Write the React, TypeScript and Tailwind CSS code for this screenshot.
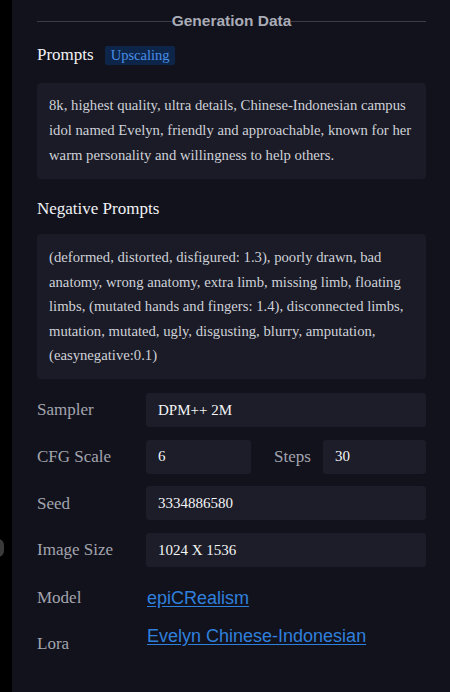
import React from 'react';

const serif = "font-['Liberation_Serif','Times_New_Roman',serif]";
const sans = "font-['Liberation_Sans',Arial,sans-serif]";

function Label({ children }: { children: React.ReactNode }) {
  return <div className={`${serif} text-[17px] text-[#a3a5ae] w-[109px] shrink-0`}>{children}</div>;
}

function Value({ children, className = '' }: { children: React.ReactNode; className?: string }) {
  return (
    <div className={`h-[34px] bg-[#1c1d28] rounded-[3px] flex items-center px-3 ${serif} text-[15px] text-[#f3f4f6] ${className}`}>
      {children}
    </div>
  );
}

export default function App() {
  return (
    <div className="w-[450px] h-[692px] flex bg-black overflow-hidden">
      {/* left strip */}
      <div className="w-[12px] shrink-0 flex flex-col">
        <div className="mt-[539px] -ml-[8px] w-[12px] h-[18px] rounded-full bg-[#3a3a3a]" />
      </div>

      <div className="flex-1 bg-[#12121d] pl-[25px] pr-[24px]">
        {/* header */}
        <div className="flex items-center h-[42px]">
          <div className="flex-1 h-px bg-[#3a3c48]" />
          <div className={`${sans} font-bold text-[15.5px] text-[#a9acb6]`}>Generation Data</div>
          <div className="flex-1 h-px bg-[#3a3c48]" />
        </div>

        {/* prompts */}
        <div className="flex items-center gap-[11px] h-[26px]">
          <h2 className={`${serif} text-[17px] text-[#f1f2f5]`}>Prompts</h2>
          <span className={`${serif} text-[14.5px] text-[#4a8ee6] bg-[#0d2549] rounded-[2px] px-[6px] leading-[19px]`}>Upscaling</span>
        </div>
        <div className={`mt-[15px] bg-[#1a1b26] rounded-[4px] px-3 pt-[10px] pb-[11px] ${serif} text-[14.7px] leading-[25px] text-[#cfd1d8]`}>
          8k, highest quality, ultra details, Chinese-Indonesian campus idol named Evelyn, friendly and approachable, known for her warm personality and willingness to help others.
        </div>

        {/* negative prompts */}
        <h2 className={`${serif} text-[17px] text-[#f1f2f5] mt-[17px] leading-[26px]`}>Negative Prompts</h2>
        <div className={`mt-[12px] bg-[#1a1b26] rounded-[4px] px-3 pt-[11px] pb-[11px] ${serif} text-[14.7px] leading-[24.6px] text-[#cfd1d8]`}>
          (deformed, distorted, disfigured: 1.3), poorly drawn, bad anatomy, wrong anatomy, extra limb, missing limb, floating limbs, (mutated hands and fingers: 1.4), disconnected limbs, mutation, mutated, ugly, disgusting, blurry, amputation, (easynegative:0.1)
        </div>

        {/* params */}
        <div className="mt-[14px] flex flex-col gap-[12.7px]">
          <div className="flex items-center">
            <Label>Sampler</Label>
            <Value className="flex-1">DPM++ 2M</Value>
          </div>
          <div className="flex items-center">
            <Label>CFG Scale</Label>
            <Value className="w-[105px]">6</Value>
            <div className={`${serif} text-[17px] text-[#a3a5ae] ml-[23px] w-[49px]`}>Steps</div>
            <Value className="flex-1">30</Value>
          </div>
          <div className="flex items-center">
            <Label>Seed</Label>
            <Value className="flex-1">3334886580</Value>
          </div>
          <div className="flex items-center">
            <Label>Image Size</Label>
            <Value className="flex-1">1024 X 1536</Value>
          </div>
        </div>

        <div className="mt-[14px] flex items-center h-[34px]">
          <Label>Model</Label>
          <a href="#" className={`${sans} text-[18px] text-[#2f80dc] underline underline-offset-2 ml-px`}>epiCRealism</a>
        </div>
        <div className="mt-[8px] flex items-start h-[34px]">
          <div className="pt-[8px]"><Label>Lora</Label></div>
          <a href="#" className={`${sans} text-[18px] text-[#2f80dc] underline underline-offset-2 ml-px`}>Evelyn Chinese-Indonesian</a>
        </div>
      </div>
    </div>
  );
}
